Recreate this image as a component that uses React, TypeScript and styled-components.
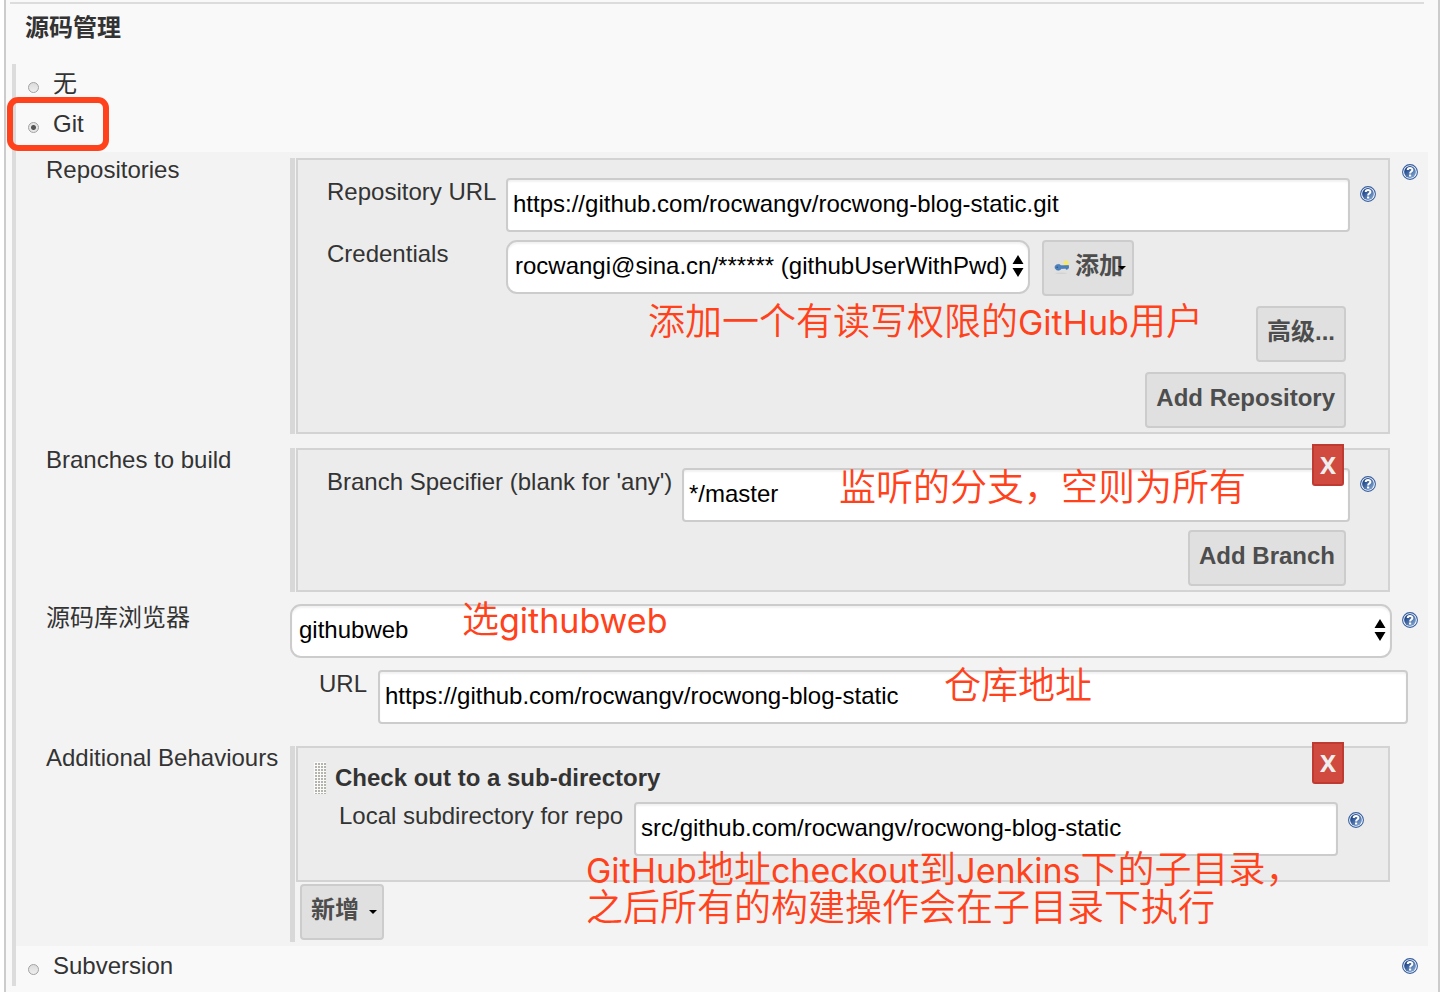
import React, { useState } from "react";
import styled, { createGlobalStyle, css } from "styled-components";

const sans = `"Liberation Sans", "Noto Sans CJK SC", sans-serif`;

const GlobalStyle = createGlobalStyle`
  *, *::before, *::after { box-sizing: border-box; }
  body {
    margin: 0;
    background: #fff;
    color: #333;
    font: 24px/24px ${sans};
  }
  input, select, button { font: inherit; }
`;

const Page = styled.main`
  min-height: 100vh;
  margin: 0 4px;
  padding: 2px 10px 6px 6px;
  border: solid #ccc;
  border-width: 0 2px;
  background: #f9f9f9;
`;

const Divider = styled.hr`
  height: 2px;
  margin: 0 4px 0 -2px;
  border: 0;
  background: #dcdcdc;
`;

const SectionTitle = styled.h2`
  margin: 12px 0 24px 13px;
  font-size: 24px;
  line-height: 24px;
  font-weight: 700;
`;

const Fieldset = styled.div`
  border-left: 4px solid #dcdcdc;
`;

const RadioRow = styled.div`
  position: relative;
  display: flex;
  align-items: center;
  justify-content: space-between;
  height: 40px;
  padding: 0 10px 0 12px;
`;

const RadioLabel = styled.label`
  display: flex;
  align-items: center;
  gap: 14px;
`;

const Radio = styled.input`
  appearance: none;
  width: 11px;
  height: 11px;
  margin: 6px 0 0;
  border: 1px solid #a2a2a2;
  border-radius: 50%;
  background: linear-gradient(#dcdcdc, #eee);
  &:checked {
    background: radial-gradient(circle, #555 0 2px, #e6e6e6 3px);
  }
`;

const Highlight = styled.span`
  position: absolute;
  top: -7px;
  left: -9px;
  width: 102px;
  height: 54px;
  border: 6px solid #ff421c;
  border-radius: 11px;
  pointer-events: none;
`;

const GitPanel = styled.div`
  display: flex;
  flex-direction: column;
  gap: 14px;
  margin-top: 8px;
  padding: 6px 10px 4px 30px;
  background: #f3f3f3;
`;

const Entry = styled.section<{ $spaced?: boolean }>`
  display: grid;
  grid-template-columns: 244px minmax(0, 1fr) 16px;
  margin-top: ${(p) => (p.$spaced ? 8 : 0)}px;
`;

const Content = styled.div`
  position: relative;
  margin-right: 12px;
`;

const Chunk = styled(Content)`
  padding-left: 1px;
  border-left: 5px solid #d8d8d8;
`;

const Box = styled.div<{ $pad: string }>`
  position: relative;
  display: flex;
  flex-direction: column;
  gap: 8px;
  padding: ${(p) => p.$pad};
  border: 2px solid #d3d3d3;
  background: #ececec;
`;

const Field = styled.div<{ $label: number }>`
  display: grid;
  grid-template-columns: ${(p) => p.$label}px minmax(0, 1fr) 16px;
`;

const Caption = styled.label`
  padding-top: 2px;
  white-space: nowrap;
`;

const HelpButton = styled.button<{ $top?: number }>`
  display: block;
  width: 16px;
  height: 16px;
  margin: ${(p) => p.$top ?? 0}px 0 0;
  padding: 0;
  border: 0;
  background: none;
  svg { display: block; }
`;

const control = css`
  width: 100%;
  height: 54px;
  border: 2px solid #ccc;
  background: #fff;
  color: #000;
  box-shadow: inset 0 2px 2px #f2f2f2;
`;

const TextBox = styled.input`
  ${control}
  display: block;
  padding: 0 5px 2px;
  border-radius: 4px;
`;

const Controls = styled.div`
  position: relative;
  margin-right: 10px;
`;

const CredentialLine = styled.div`
  display: flex;
  align-items: flex-start;
  gap: 12px;
`;

const SelectFrame = styled.div<{ $wide?: boolean }>`
  position: relative;
  ${(p) => (p.$wide ? "margin: -2px -2px 0 0;" : "width: 524px;")}
  > svg {
    position: absolute;
    top: 14px;
    right: 6px;
    pointer-events: none;
  }
`;

const SelectBox = styled.select`
  ${control}
  display: block;
  appearance: none;
  padding: 0 18px 2px 7px;
  border-radius: 11px;
  line-height: 32px;
`;

const Button = styled.button`
  display: flex;
  align-items: center;
  gap: 6px;
  height: 56px;
  padding: 0 9px 4px;
  border: 2px solid #ccc;
  border-radius: 4px;
  background: #e0e0e0;
  color: #4d4d4d;
  font-weight: 700;
  white-space: nowrap;
`;

const MenuButton = styled(Button)<{ $width: number }>`
  position: relative;
  width: ${(p) => p.$width}px;
  &::after {
    content: "";
    position: absolute;
    top: 24px;
    right: ${(p) => (p.$width > 90 ? 6 : 5)}px;
    border: solid transparent;
    border-width: 4px 4px 0;
    border-top-color: #000;
  }
`;

const Actions = styled.div`
  display: flex;
  flex-direction: column;
  align-items: flex-end;
  gap: 10px;
  margin-right: 30px;
`;

const RepoActions = styled(Actions)`
  padding-top: 2px;
`;

const CloseButton = styled.button`
  position: absolute;
  z-index: 1;
  top: -6px;
  right: 44px;
  width: 32px;
  height: 42px;
  padding: 0;
  border: 2px solid #bf3a30;
  border-radius: 0 0 3px 3px;
  background: #d04a3f;
  color: #eee;
  font-family: "Noto Sans", sans-serif;
  font-weight: 700;
`;

const UrlField = styled.div`
  display: grid;
  grid-template-columns: 59px minmax(0, 1fr);
  margin: -2px 0 0 273px;
`;

const BehaviourTitle = styled.div`
  display: flex;
  align-items: center;
  gap: 9px;
  height: 32px;
  font-weight: 700;
`;

const Grip = styled.span`
  width: 12px;
  height: 32px;
  background: #fafafa radial-gradient(circle at 1px 1px, #b4b4ac 0 1px, transparent 1px) 1px 1px / 3px 3px;
`;

const BehaviourBody = styled.div`
  padding: 0 12px 0 25px;
`;

const AddBehaviour = styled.div`
  padding: 2px 0 2px 4px;
`;

const Note = styled.p<{ $x: number; $y: number }>`
  position: absolute;
  z-index: 2;
  left: ${(p) => p.$x}px;
  top: ${(p) => p.$y}px;
  margin: 0;
  color: #ff421c;
  font: 350 37px/38px "Noto Sans CJK SC", sans-serif;
  white-space: nowrap;
  pointer-events: none;
`;

const Latin = styled.span`
  font: 400 34px/1px Inter, sans-serif;
`;

function Help({ top, label }: { top?: number; label: string }) {
  return (
    <HelpButton type="button" $top={top} aria-label={label}>
      <svg width="16" height="16" viewBox="0 0 16 16">
        <defs>
          <linearGradient id="helpFill" x1="0" y1="0" x2="1" y2="1">
            <stop offset="0.2" stopColor="#1f4689" />
            <stop offset="1" stopColor="#8fb2dc" />
          </linearGradient>
        </defs>
        <circle cx="8" cy="8" r="7.4" fill="#fff" stroke="#365f9f" strokeWidth="1.1" />
        <circle cx="8" cy="8" r="5.9" fill="url(#helpFill)" />
        <path d="M5.7 6.1C5.7 3.3 10.4 3.3 10.4 5.9C10.4 7.6 8.1 7.5 8.1 9.5" fill="none" stroke="#fff" strokeWidth="2" />
        <rect x="7" y="10.5" width="2.2" height="2" fill="#fff" />
      </svg>
    </HelpButton>
  );
}

function UpDown() {
  return (
    <svg width="12" height="24" viewBox="0 0 12 24" aria-hidden="true">
      <path d="M6 1L11.5 10H0.5ZM6 23L11.5 14H0.5Z" fill="#000" />
    </svg>
  );
}

function KeyIcon() {
  return (
    <svg width="16" height="16" viewBox="0 0 16 16" aria-hidden="true">
      <ellipse cx="8" cy="15.2" rx="6" ry="0.7" fill="#d2d2d2" />
      <circle cx="13" cy="5" r="2.6" fill="#f5ea6a" />
      <path d="M2 9.2C2 6 7 5.6 8 7.8L15.6 7.6V10.2H14.4V11.2H13V10.2L8.2 10.6C6.8 13.2 2 12.4 2 9.2Z" fill="#4c82bd" stroke="#356ca8" strokeWidth="0.6" />
      <circle cx="4.2" cy="9.2" r="0.8" fill="#2b5489" />
    </svg>
  );
}

export default function App() {
  const [scm, setScm] = useState("git");
  const radio = (value: string, text: string) => (
    <RadioLabel>
      <Radio type="radio" name="scm" checked={scm === value} onChange={() => setScm(value)} />
      {text}
    </RadioLabel>
  );

  return (
    <>
      <GlobalStyle />
      <Page>
        <Divider />
        <SectionTitle>源码管理</SectionTitle>
        <Fieldset role="radiogroup" aria-label="源码管理">
          <RadioRow>{radio("none", "无")}</RadioRow>
          <RadioRow>
            {radio("git", "Git")}
            <Highlight />
          </RadioRow>

          <GitPanel>
            <Entry>
              <div>Repositories</div>
              <Chunk>
                <Box $pad="18px 12px 4px 29px">
                  <Field $label={179}>
                    <Caption htmlFor="repo-url">Repository URL</Caption>
                    <Controls>
                      <TextBox id="repo-url" defaultValue="https://github.com/rocwangv/rocwong-blog-static.git" />
                    </Controls>
                    <Help top={8} label="Repository URL" />
                  </Field>
                  <Field $label={179}>
                    <Caption htmlFor="credentials">Credentials</Caption>
                    <CredentialLine>
                      <SelectFrame>
                        <SelectBox id="credentials">
                          <option>rocwangi@sina.cn/****** (githubUserWithPwd)</option>
                        </SelectBox>
                        <UpDown />
                      </SelectFrame>
                      <MenuButton type="button" $width={92}>
                        <KeyIcon />
                        添加
                      </MenuButton>
                    </CredentialLine>
                  </Field>
                  <RepoActions>
                    <Button type="button">高级...</Button>
                    <Button type="button">Add Repository</Button>
                  </RepoActions>
                  <Note $x={350} $y={140}>
                    添加一个有读写权限的<Latin>GitHub</Latin>用户
                  </Note>
                </Box>
              </Chunk>
              <Help top={6} label="Repositories" />
            </Entry>

            <Entry>
              <div>Branches to build</div>
              <Chunk>
                <Box $pad="18px 12px 4px 29px">
                  <CloseButton type="button">X</CloseButton>
                  <Field $label={355}>
                    <Caption htmlFor="branch">Branch Specifier (blank for 'any')</Caption>
                    <Controls>
                      <TextBox id="branch" defaultValue="*/master" />
                    </Controls>
                    <Help top={8} label="Branch Specifier" />
                  </Field>
                  <Actions>
                    <Button type="button">Add Branch</Button>
                  </Actions>
                  <Note $x={541} $y={16}>监听的分支，空则为所有</Note>
                </Box>
              </Chunk>
            </Entry>

            <Entry>
              <label htmlFor="browser">源码库浏览器</label>
              <Content>
                <SelectFrame $wide>
                  <SelectBox id="browser">
                    <option>githubweb</option>
                  </SelectBox>
                  <UpDown />
                </SelectFrame>
                <Note $x={172} $y={-8}>
                  选<Latin>githubweb</Latin>
                </Note>
              </Content>
              <Help top={6} label="源码库浏览器" />
            </Entry>

            <UrlField>
              <Caption htmlFor="browser-url">URL</Caption>
              <Controls>
                <TextBox id="browser-url" defaultValue="https://github.com/rocwangv/rocwong-blog-static" />
                <Note $x={566} $y={-6}>仓库地址</Note>
              </Controls>
            </UrlField>

            <Entry $spaced>
              <div>Additional Behaviours</div>
              <Chunk>
                <Box $pad="14px 12px 24px 16px">
                  <CloseButton type="button">X</CloseButton>
                  <BehaviourTitle>
                    <Grip />
                    Check out to a sub-directory
                  </BehaviourTitle>
                  <BehaviourBody>
                    <Field $label={295}>
                      <Caption htmlFor="subdir">Local subdirectory for repo</Caption>
                      <Controls>
                        <TextBox id="subdir" defaultValue="src/github.com/rocwangv/rocwong-blog-static" />
                      </Controls>
                      <Help top={10} label="Local subdirectory for repo" />
                    </Field>
                  </BehaviourBody>
                  <Note $x={288} $y={100}>
                    <Latin>GitHub</Latin>地址<Latin>checkout</Latin>到<Latin>Jenkins</Latin>下的子目录，
                    <br />
                    之后所有的构建操作会在子目录下执行
                  </Note>
                </Box>
                <AddBehaviour>
                  <MenuButton type="button" $width={84}>新增</MenuButton>
                </AddBehaviour>
              </Chunk>
            </Entry>
          </GitPanel>

          <RadioRow>
            {radio("svn", "Subversion")}
            <Help label="Subversion" />
          </RadioRow>
        </Fieldset>
      </Page>
    </>
  );
}
